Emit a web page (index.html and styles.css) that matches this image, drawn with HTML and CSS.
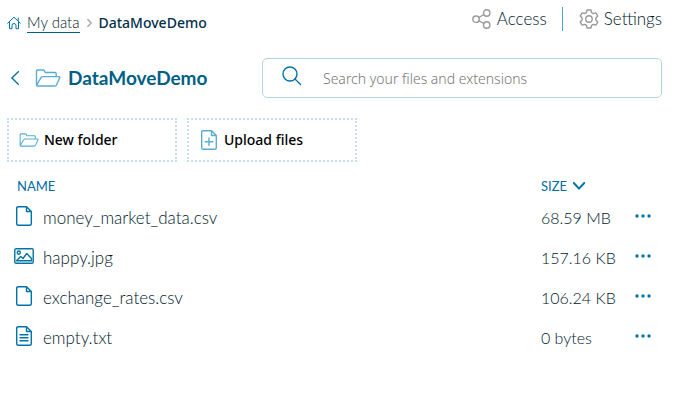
FILE: index.html
```html
<!DOCTYPE html>
<html lang="en">
<head>
<meta charset="utf-8">
<meta name="viewport" content="width=device-width, initial-scale=1">
<title>DataMoveDemo</title>
<link rel="stylesheet" href="styles.css">
</head>
<body>
<svg class="sprite" aria-hidden="true">
  <symbol id="folder" viewBox="0 0 26 18"><path d="M1.5 16.5V2Q1.5 1 2.5 1H8Q9 1 9.5 2L10.2 3.5H20Q21.2 3.5 21.2 4.7V7.5M1.5 16.5L6 8.7Q6.6 7.6 8 7.6H24Q25.2 7.6 24.7 8.7L21.6 15.7Q21 17 19.8 17H2.5Q1.5 17 1.5 16"/></symbol>
  <symbol id="file" viewBox="0 0 16 20"><path d="M10.5 .7H2.2Q.7.7.7 2.2V17.8Q.7 19.3 2.2 19.3H13.8Q15.3 19.3 15.3 17.8V5.5ZV5.5H15.3"/></symbol>
  <symbol id="dots" viewBox="0 0 16 4"><circle cx="2" cy="2" r="1.7"/><circle cx="8" cy="2" r="1.7"/><circle cx="14" cy="2" r="1.7"/></symbol>
</svg>
<header class="topbar">
  <nav class="crumbs" aria-label="Breadcrumb">
    <svg class="icon home" viewBox="0 0 14 14"><path d="M.7 7.2L7 1.2L13.3 7.2M2.5 6V12.7H5V9.5Q5 7.5 7 7.5T9 9.5V12.7H11.5V6M11.2 4.5V2"/></svg>
    <a href="#">My data</a>
    <svg class="icon separator" viewBox="0 0 5 8"><path d="M.8.5L4.2 4L.8 7.5"/></svg>
    <span class="current">DataMoveDemo</span>
  </nav>
  <div class="actions">
    <button type="button"><svg class="icon share" viewBox="0 0 20 20"><circle cx="4" cy="10.2" r="3.2"/><circle cx="14.7" cy="4" r="3.2"/><circle cx="14.7" cy="16" r="3.2"/><path d="M6.8 8.5L12 5.5M6.8 11.8L12 14.5"/></svg>Access</button>
    <button type="button"><svg class="icon gear" viewBox="0 0 20 20"><path d="M8.1 1H11.9L12.6 3.6L14.3 4.6L16.9 3.9L18.8 7.1L16.9 9V11L18.8 12.9L16.9 16.1L14.3 15.4L12.6 16.4L11.9 19H8.1L7.4 16.4L5.7 15.4L3.1 16.1L1.2 12.9L3.1 11V9L1.2 7.1L3.1 3.9L5.7 4.6L7.4 3.6Z"/><circle cx="10" cy="10" r="3.2"/></svg>Settings</button>
  </div>
</header>
<main>
  <div class="heading">
    <div class="title">
      <button type="button" aria-label="Back"><svg class="icon back" viewBox="0 0 8 14"><path d="M7.3.7L.9 7L7.3 13.3"/></svg></button>
      <svg class="icon title-folder"><use href="#folder"/></svg>
      <h1>DataMoveDemo</h1>
    </div>
    <label class="search">
      <svg class="icon magnifier" viewBox="0 0 20 20"><circle cx="8" cy="8" r="7"/><path d="M13 13L18.5 18.5"/></svg>
      <input type="search" aria-label="Search" placeholder="Search your files and extensions">
    </label>
  </div>
  <div class="tiles">
    <button type="button"><svg class="icon tile-folder"><use href="#folder"/></svg>New folder</button>
    <button type="button"><svg class="icon upload" viewBox="0 0 16 20"><use href="#file"/><path d="M8 8V15.6M4.2 11.8H11.8"/></svg>Upload files</button>
  </div>
  <table>
    <thead>
      <tr><th class="name" scope="col">NAME</th><th class="size" scope="col"><button type="button">SIZE<svg class="icon sort" viewBox="0 0 12 8"><path d="M.8 1L6 6.6L11.2 1"/></svg></button></th><td class="more"></td></tr>
    </thead>
    <tbody>
      <tr><td><div class="entry"><svg class="icon file"><use href="#file"/></svg>money_market_data.csv</div></td><td class="amount">68.59 MB</td><td><button type="button" aria-label="More"><svg class="dots"><use href="#dots"/></svg></button></td></tr>
      <tr><td><div class="entry"><svg class="icon image" viewBox="0 0 20 16"><rect x=".8" y=".8" width="18.4" height="14.4" rx="1.2"/><circle cx="4.8" cy="4.6" r="1.6"/><path d="M2.5 12.7L6.7 8.5L9 10.5L12.7 5.5L17.5 10.5V12.7Z"/></svg>happy.jpg</div></td><td class="amount">157.16 KB</td><td><button type="button" aria-label="More"><svg class="dots"><use href="#dots"/></svg></button></td></tr>
      <tr><td><div class="entry"><svg class="icon file"><use href="#file"/></svg>exchange_rates.csv</div></td><td class="amount">106.24 KB</td><td><button type="button" aria-label="More"><svg class="dots"><use href="#dots"/></svg></button></td></tr>
      <tr><td><div class="entry"><svg class="icon file" viewBox="0 0 16 20"><use href="#file"/><path d="M4 8.8H12M4 11.8H12M4 14.8H12"/></svg>empty.txt</div></td><td class="amount">0 bytes</td><td><button type="button" aria-label="More"><svg class="dots"><use href="#dots"/></svg></button></td></tr>
    </tbody>
  </table>
</main>
</body>
</html>
```
FILE: styles.css
```css
* { box-sizing: border-box; }
body {
  margin: 0;
  padding: 0 12px 0 7px;
  background: #fff;
  color: #001a2b;
  font: 300 17px/24px Lato, "Liberation Sans", sans-serif;
}
button {
  display: flex;
  align-items: center;
  padding: 0;
  border: 0;
  background: none;
  color: inherit;
  font: inherit;
}
.sprite { position: absolute; width: 0; height: 0; }
.icon {
  flex: none;
  fill: none;
  stroke: #0074a8;
  stroke-width: 1.4;
  stroke-linecap: round;
  stroke-linejoin: round;
}
.topbar {
  display: flex;
  align-items: flex-start;
  justify-content: space-between;
  padding-top: 7px;
}
.crumbs { display: flex; align-items: center; padding-top: 5px; font-size: 15px; line-height: 20px; }
.crumbs a { margin: 0 7px 0 6px; border-bottom: 1px solid #00608a; color: inherit; line-height: 20px; text-decoration: none; }
.home { width: 14px; height: 14px; stroke-width: 1; }
.separator { width: 5px; height: 8px; margin-right: 7px; stroke: #a5a9ab; }
.current { color: #032f4b; font: 500 14px/20px "Noto Sans", sans-serif; }
.actions { display: flex; }
.actions button + button { margin-left: 15px; padding-left: 16px; border-left: 1px solid #4aa6cf; }
.share, .gear { width: 20px; height: 20px; margin-right: 5px; stroke: #999; }
.heading { display: flex; align-items: center; gap: 16px; margin-top: 25px; }
.title { display: flex; flex: none; align-items: center; width: 239px; padding-left: 3px; }
.back { width: 10px; height: 14px; margin-right: 15px; }
.title-folder { width: 26px; height: 18px; margin-right: 7px; stroke: #5aadd0; }
h1 { margin: 0; color: #005f85; font: bold 19px/24px Lato, sans-serif; }
.search {
  display: flex;
  flex: 1;
  align-items: center;
  height: 40px;
  padding: 0 19px;
  border: 1px solid #b3d4e5;
  border-radius: 5px;
}
.magnifier { width: 20px; height: 20px; margin-bottom: 4px; }
.search input {
  flex: 1;
  min-width: 0;
  margin-left: 21px;
  padding: 2px 0 0;
  border: 0;
  outline: 0;
  background: none;
  font: 300 14px/20px "Noto Sans", sans-serif;
}
.search input::placeholder { color: #777; }
.tiles { display: flex; gap: 10px; margin-top: 20px; }
.tiles button {
  width: 170px;
  height: 44px;
  padding: 0 10px;
  border: 2px dotted #c5e0ec;
  color: #000;
  font: 500 14px/20px "Noto Sans", sans-serif;
}
.tiles .icon { stroke: #5aadd0; }
.tile-folder { width: 20px; height: 14px; margin-right: 5px; }
.upload { width: 16px; height: 20px; margin: 0 7px 0 2px; }
table { width: 100%; margin-top: 12px; border-collapse: collapse; table-layout: fixed; }
th, td { padding: 0; text-align: left; }
th { height: 24px; color: #006da3; font-size: 13px; font-weight: normal; }
th.name { padding-left: 10px; }
.size { width: 94px; }
.more { width: 27px; }
.sort { width: 12px; height: 8px; margin-left: 6px; stroke-width: 2; }
tbody td { height: 40px; }
td.amount { font-size: 16px; }
.entry { display: flex; align-items: center; padding-left: 7px; }
.entry .icon, .dots { margin-bottom: 4px; }
.file { width: 16px; height: 20px; margin: 0 11px 0 2px; }
.image { width: 20px; height: 16px; margin-right: 9px; }
.dots { display: block; width: 16px; height: 4px; fill: #0074a8; }
```
